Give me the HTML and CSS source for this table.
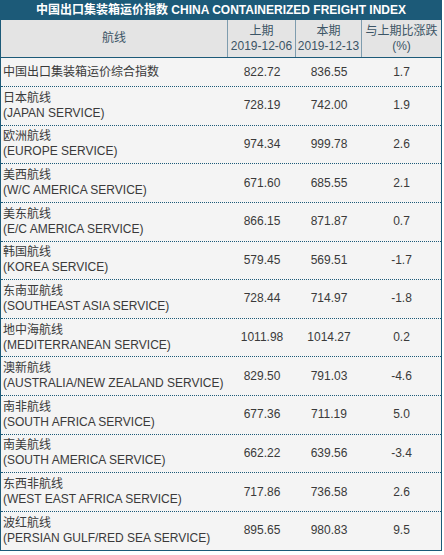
FILE: index.html
```html
<!DOCTYPE html>
<html lang="zh">
<head>
<meta charset="utf-8">
<link rel="stylesheet" href="styles.css">
</head>
<body>
<div class="panel">
  <div class="title">中国出口集装箱运价指数 CHINA CONTAINERIZED FREIGHT INDEX</div>
  <div class="row head">
    <div class="c">航线</div>
    <div class="c">上期<br>2019-12-06</div>
    <div class="c">本期<br>2019-12-13</div>
    <div class="c">与上期比涨跌<br>(%)</div>
  </div>
  <div class="row first">
    <div class="name">中国出口集装箱运价综合指数</div>
    <div class="n">822.72</div><div class="n">836.55</div><div class="n">1.7</div>
  </div>
  <div class="row">
    <div class="name">日本航线<br>(JAPAN SERVICE)</div>
    <div class="n">728.19</div><div class="n">742.00</div><div class="n">1.9</div>
  </div>
  <div class="row">
    <div class="name">欧洲航线<br>(EUROPE SERVICE)</div>
    <div class="n">974.34</div><div class="n">999.78</div><div class="n">2.6</div>
  </div>
  <div class="row">
    <div class="name">美西航线<br>(W/C AMERICA SERVICE)</div>
    <div class="n">671.60</div><div class="n">685.55</div><div class="n">2.1</div>
  </div>
  <div class="row">
    <div class="name">美东航线<br>(E/C AMERICA SERVICE)</div>
    <div class="n">866.15</div><div class="n">871.87</div><div class="n">0.7</div>
  </div>
  <div class="row">
    <div class="name">韩国航线<br>(KOREA SERVICE)</div>
    <div class="n">579.45</div><div class="n">569.51</div><div class="n">-1.7</div>
  </div>
  <div class="row">
    <div class="name">东南亚航线<br>(SOUTHEAST ASIA SERVICE)</div>
    <div class="n">728.44</div><div class="n">714.97</div><div class="n">-1.8</div>
  </div>
  <div class="row">
    <div class="name">地中海航线<br>(MEDITERRANEAN SERVICE)</div>
    <div class="n">1011.98</div><div class="n">1014.27</div><div class="n">0.2</div>
  </div>
  <div class="row">
    <div class="name">澳新航线<br>(AUSTRALIA/NEW ZEALAND SERVICE)</div>
    <div class="n">829.50</div><div class="n">791.03</div><div class="n">-4.6</div>
  </div>
  <div class="row">
    <div class="name">南非航线<br>(SOUTH AFRICA SERVICE)</div>
    <div class="n">677.36</div><div class="n">711.19</div><div class="n">5.0</div>
  </div>
  <div class="row">
    <div class="name">南美航线<br>(SOUTH AMERICA SERVICE)</div>
    <div class="n">662.22</div><div class="n">639.56</div><div class="n">-3.4</div>
  </div>
  <div class="row">
    <div class="name">东西非航线<br>(WEST EAST AFRICA SERVICE)</div>
    <div class="n">717.86</div><div class="n">736.58</div><div class="n">2.6</div>
  </div>
  <div class="row last">
    <div class="name">波红航线<br>(PERSIAN GULF/RED SEA SERVICE)</div>
    <div class="n">895.65</div><div class="n">980.83</div><div class="n">9.5</div>
  </div>
</div>
</body>
</html>
```
FILE: styles.css
```css
html, body {
  margin: 0;
  padding: 0;
  background: #ffffff;
}
body {
  font-family: "Liberation Sans", Arial, "Noto Sans CJK SC", sans-serif;
  font-size: 12px;
  color: #333333;
}
.panel {
  width: 442px;
  box-sizing: border-box;
  border: 1px solid #1c5a78;
  background: #f4f4f4;
}
.title {
  height: 19px;
  line-height: 19px;
  background: #1c5a78;
  color: #ffffff;
  font-size: 12px;
  font-weight: bold;
  text-align: center;
  white-space: nowrap;
}
.row {
  display: grid;
  grid-template-columns: 227px 68px 66px 79px;
  height: 38.64px;
  box-sizing: border-box;
  border-bottom: 1px dotted #1c5a78;
  align-items: center;
}
.row.first {
  height: 29px;
}
.row.last {
  border-bottom: none;
  height: 37.64px;
}
.row.head {
  height: 38px;
  background: #e4e4e4;
  border-bottom: 1px solid #1c5a78;
  align-items: stretch;
  color: #3c5566;
}
.head .c {
  display: flex;
  align-items: center;
  justify-content: center;
  text-align: center;
  line-height: 15px;
  border-right: 1px solid #7e9cae;
}
.head .c:last-child {
  border-right: none;
}
.name {
  padding-left: 2px;
  line-height: 15px;
  white-space: nowrap;
  color: #3a3a3a;
}
.n {
  text-align: center;
  line-height: 15px;
  color: #3a3a3a;
}
```
